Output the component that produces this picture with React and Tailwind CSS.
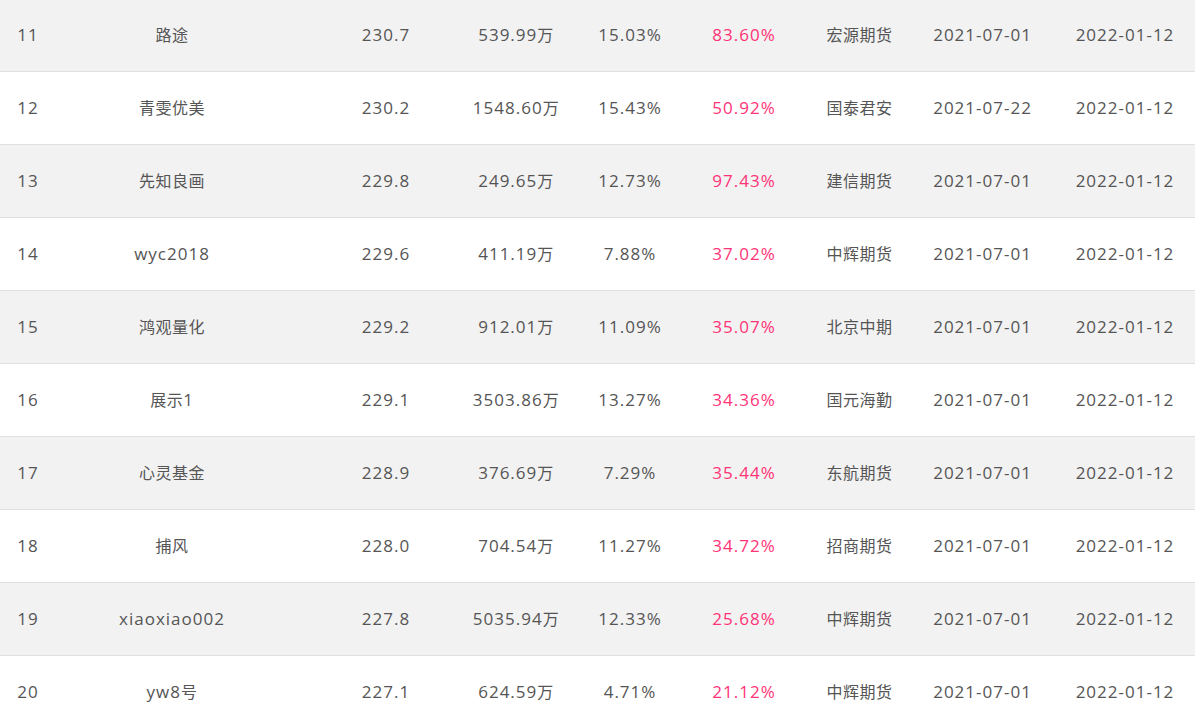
const rows = [
  ['11', '路途', '230.7', '539.99万', '15.03%', '83.60%', '宏源期货', '2021-07-01', '2022-01-12'],
  ['12', '青雯优美', '230.2', '1548.60万', '15.43%', '50.92%', '国泰君安', '2021-07-22', '2022-01-12'],
  ['13', '先知良画', '229.8', '249.65万', '12.73%', '97.43%', '建信期货', '2021-07-01', '2022-01-12'],
  ['14', 'wyc2018', '229.6', '411.19万', '7.88%', '37.02%', '中辉期货', '2021-07-01', '2022-01-12'],
  ['15', '鸿观量化', '229.2', '912.01万', '11.09%', '35.07%', '北京中期', '2021-07-01', '2022-01-12'],
  ['16', '展示1', '229.1', '3503.86万', '13.27%', '34.36%', '国元海勤', '2021-07-01', '2022-01-12'],
  ['17', '心灵基金', '228.9', '376.69万', '7.29%', '35.44%', '东航期货', '2021-07-01', '2022-01-12'],
  ['18', '捕风', '228.0', '704.54万', '11.27%', '34.72%', '招商期货', '2021-07-01', '2022-01-12'],
  ['19', 'xiaoxiao002', '227.8', '5035.94万', '12.33%', '25.68%', '中辉期货', '2021-07-01', '2022-01-12'],
  ['20', 'yw8号', '227.1', '624.59万', '4.71%', '21.12%', '中辉期货', '2021-07-01', '2022-01-12'],
];

// Chinese runs are set a little smaller than the Latin digits, like YaHei does
function Txt({ children }) {
  return children.split(/([\u4e00-\u9fff]+)/).map((part, i) =>
    i % 2 === 1 ? (
      <span key={i} className="text-[16px] tracking-[0.5px]">{part}</span>
    ) : (
      part
    )
  );
}

export default function App() {
  return (
    <div className="h-[723px] overflow-hidden bg-white font-['Open_Sans','Noto_Sans_CJK_SC',sans-serif] text-[17px] tracking-[1px] text-[#555]">
      <div className="-mt-px">
        {rows.map((r, i) => (
          <div
            key={r[0]}
            className={`grid h-[73px] grid-cols-[56px_232px_196px_64px_164px_64px_167px_79px_173px] items-center whitespace-nowrap border-b border-[#e0e0e0] ${i % 2 === 0 ? 'bg-[#f2f2f2]' : 'bg-white'}`}
          >
            <div className="flex justify-center">{r[0]}</div>
            <div className="flex justify-center"><span><Txt>{r[1]}</Txt></span></div>
            <div className="flex justify-center">{r[2]}</div>
            <div className="flex justify-center"><span><Txt>{r[3]}</Txt></span></div>
            <div className="flex justify-center">{r[4]}</div>
            <div className="flex justify-center text-[#ff3377]">{r[5]}</div>
            <div className="flex justify-center"><span><Txt>{r[6]}</Txt></span></div>
            <div className="flex justify-center">{r[7]}</div>
            <div className="flex justify-center pl-[33px]">{r[8]}</div>
          </div>
        ))}
      </div>
    </div>
  );
}
